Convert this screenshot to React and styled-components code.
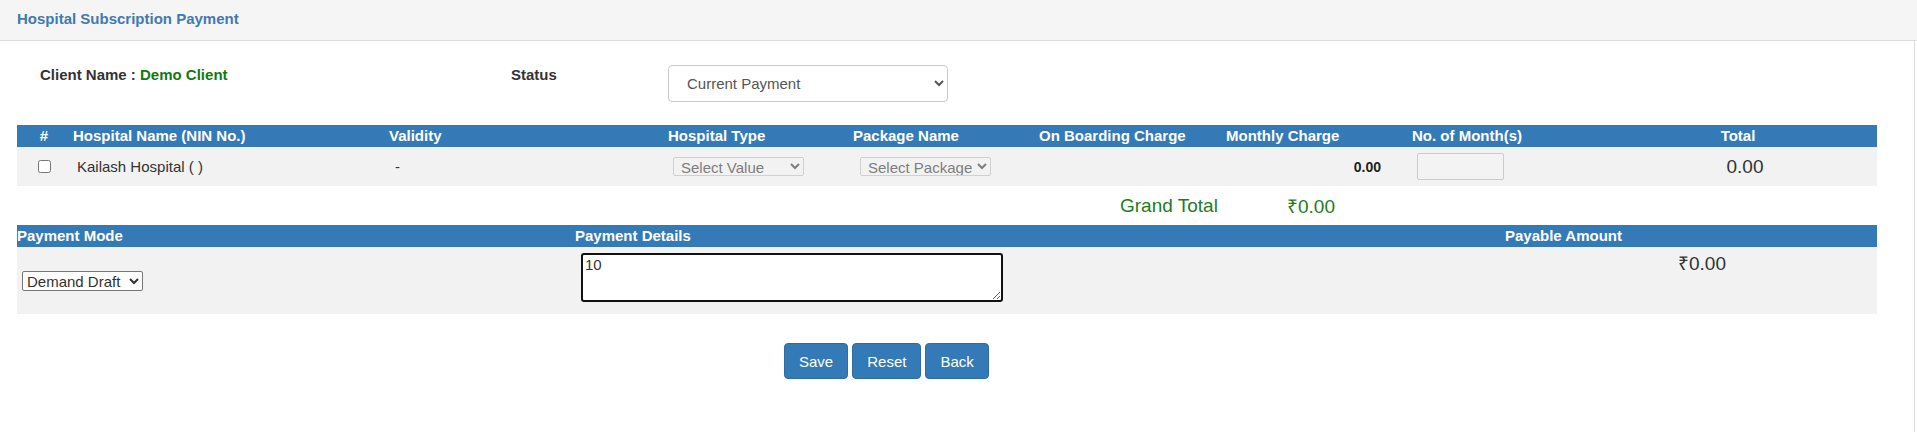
import styled, { createGlobalStyle } from "styled-components"

const GlobalStyle = createGlobalStyle`
    body {
        margin: 0;
        background-color: #FFFFFF;
        font-family: "Liberation Sans", Arial, sans-serif;
        color: #333333;
    }
`

const colunas = [
    { titulo: "#", centro: true },
    { titulo: "Hospital Name (NIN No.)" },
    { titulo: "Validity" },
    { titulo: "Hospital Type" },
    { titulo: "Package Name" },
    { titulo: "On Boarding Charge" },
    { titulo: "Monthly Charge" },
    { titulo: "No. of Month(s)" },
    { titulo: "Total", centro: true },
]

const gradeHospital = "54px 316px 279px 185px 186px 187px 186px 189px 1fr"
const gradePagamento = "558px 930px 1fr"

export default function App() {
    return (
        <>
            <GlobalStyle />
            <Cabecalho>
                <TituloPagina>Hospital Subscription Payment</TituloPagina>
            </Cabecalho>

            <Cartao>
                <LinhaInfo>
                    <Rotulo recuo="23px">
                        Client Name : <Verde>Demo Client</Verde>
                    </Rotulo>
                    <Rotulo>Status</Rotulo>
                    <SelectStatus defaultValue="current">
                        <option value="current">Current Payment</option>
                        <option value="previous">Previous Payment</option>
                    </SelectStatus>
                </LinhaInfo>

                <Tabela colunas={gradeHospital}>
                    {colunas.map((c) => (
                        <CelulaTitulo key={c.titulo} centro={c.centro}>{c.titulo}</CelulaTitulo>
                    ))}
                </Tabela>
                <Tabela colunas={gradeHospital} cinza altura="39px">
                    <Celula centro><input type="checkbox" /></Celula>
                    <Celula recuo="6px">Kailash Hospital ( )</Celula>
                    <Celula recuo="8px">-</Celula>
                    <Celula recuo="7px">
                        <SelectPequeno disabled defaultValue="">
                            <option value="">Select Value</option>
                        </SelectPequeno>
                    </Celula>
                    <Celula recuo="9px">
                        <SelectPequeno disabled defaultValue="">
                            <option value="">Select Package</option>
                        </SelectPequeno>
                    </Celula>
                    <Celula />
                    <Celula direita>
                        <ValorPequeno>0.00</ValorPequeno>
                    </Celula>
                    <Celula recuo="7px">
                        <CaixaMeses disabled />
                    </Celula>
                    <Celula centro recuo="14px">
                        <ValorGrande>0.00</ValorGrande>
                    </Celula>
                </Tabela>

                <LinhaTotal>
                    <TextoTotal largura="167px">Grand Total</TextoTotal>
                    <TextoTotal>₹0.00</TextoTotal>
                </LinhaTotal>

                <Tabela colunas={gradePagamento}>
                    <CelulaTitulo recuo="0px">Payment Mode</CelulaTitulo>
                    <CelulaTitulo recuo="0px">Payment Details</CelulaTitulo>
                    <CelulaTitulo recuo="0px">Payable Amount</CelulaTitulo>
                </Tabela>
                <Tabela colunas={gradePagamento} cinza altura="67px">
                    <Celula recuo="5px">
                        <SelectModo defaultValue="dd">
                            <option value="dd">Demand Draft</option>
                            <option value="cheque">Cheque</option>
                            <option value="cash">Cash</option>
                        </SelectModo>
                    </Celula>
                    <Celula recuo="6px" topo>
                        <Detalhes defaultValue="10" />
                    </Celula>
                    <Celula recuo="173px" topo>
                        <ValorGrande>₹0.00</ValorGrande>
                    </Celula>
                </Tabela>

                <Botoes>
                    <Botao>Save</Botao>
                    <Botao>Reset</Botao>
                    <Botao>Back</Botao>
                </Botoes>
            </Cartao>
        </>
    )
}

const Cabecalho = styled.div`
    height: 30px;
    padding: 10px 0 0 17px;
    background-color: #F5F5F5;
    border-bottom: 1px solid #DDDDDD;
`
const TituloPagina = styled.div`
    font-size: 15px;
    font-weight: 700;
    line-height: 17px;
    color: #4279B2;
`
const Cartao = styled.div`
    width: 1860px;
    margin-right: 1px;
    padding: 0 37px 53px 17px;
    border-right: 1px solid #DDDDDD;
`
const LinhaInfo = styled.div`
    display: grid;
    grid-template-columns: 494px 157px 280px;
    align-items: start;
    height: 84px;
    box-sizing: border-box;
    padding-top: 24px;
`
const Rotulo = styled.div`
    padding-left: ${(p) => p.recuo || "0"};
    font-size: 15px;
    font-weight: 700;
    line-height: 20px;
    color: #333333;
`
const Verde = styled.span`
    color: #117A11;
`
const SelectStatus = styled.select`
    width: 280px;
    height: 37px;
    padding: 0 8px 0 14px;
    border: 1px solid #CCCCCC;
    border-radius: 4px;
    background-color: #FFFFFF;
    font-family: "Liberation Sans", Arial, sans-serif;
    font-size: 15px;
    color: #555555;
`
const Tabela = styled.div`
    display: grid;
    grid-template-columns: ${(p) => p.colunas};
    height: ${(p) => p.altura || "22px"};
    background-color: ${(p) => (p.cinza ? "#F2F2F2" : "#337AB7")};
`
const CelulaTitulo = styled.div`
    display: flex;
    align-items: center;
    justify-content: ${(p) => (p.centro ? "center" : "flex-start")};
    padding-left: ${(p) => (p.centro ? "0" : p.recuo || "2px")};
    font-size: 15px;
    font-weight: 700;
    line-height: 22px;
    color: #FFFFFF;
    white-space: nowrap;
`
const Celula = styled.div`
    display: flex;
    align-items: ${(p) => (p.topo ? "flex-start" : "center")};
    justify-content: ${(p) => (p.centro ? "center" : p.direita ? "flex-end" : "flex-start")};
    padding-left: ${(p) => p.recuo || "0"};
    padding-right: ${(p) => (p.direita ? "29px" : "0")};
    padding-top: ${(p) => (p.topo ? "6px" : "0")};
    font-size: 15px;
    color: #333333;
    white-space: nowrap;

    input[type="checkbox"] {
        width: 13px;
        height: 13px;
        margin: 0;
    }
`
const SelectPequeno = styled.select`
    width: 131px;
    height: 19px;
    padding: 0 0 0 3px;
    border: 1px solid #D0D0D0;
    border-radius: 2px;
    background-color: #F2F2F2;
    font-family: "Liberation Sans", Arial, sans-serif;
    font-size: 15px;
    color: #7E7E7E;
    opacity: 1;
`
const ValorPequeno = styled.span`
    font-size: 14px;
    font-weight: 700;
    color: #222222;
`
const CaixaMeses = styled.input`
    width: 87px;
    height: 27px;
    box-sizing: border-box;
    border: 1px solid #CCCCCC;
    border-radius: 2px;
    background-color: #F3F3F3;
`
const ValorGrande = styled.span`
    font-size: 19px;
    line-height: 22px;
    color: #333333;
`
const LinhaTotal = styled.div`
    display: flex;
    align-items: center;
    height: 39px;
    padding-left: 1103px;
`
const TextoTotal = styled.div`
    width: ${(p) => p.largura || "auto"};
    font-size: 19px;
    color: #1E7B22;
`
const SelectModo = styled.select`
    width: 121px;
    height: 20px;
    padding: 0;
    border: 1px solid #767676;
    border-radius: 2px;
    background-color: #FFFFFF;
    font-family: "Liberation Sans", Arial, sans-serif;
    font-size: 15px;
    color: #333333;
`
const Detalhes = styled.textarea`
    width: 422px;
    height: 49px;
    box-sizing: border-box;
    padding: 1px 2px;
    border: 2px solid #111111;
    border-radius: 3px;
    font-family: "Liberation Sans", Arial, sans-serif;
    font-size: 15px;
    color: #333333;
    outline: none;
`
const Botoes = styled.div`
    display: flex;
    gap: 4px;
    margin-top: 29px;
    padding-left: 767px;
`
const Botao = styled.button`
    height: 36px;
    padding: 0 14px;
    border: 1px solid #2E6DA4;
    border-radius: 4px;
    background-color: #337AB7;
    font-family: "Liberation Sans", Arial, sans-serif;
    font-size: 15px;
    color: #FFFFFF;
    cursor: pointer;
`
